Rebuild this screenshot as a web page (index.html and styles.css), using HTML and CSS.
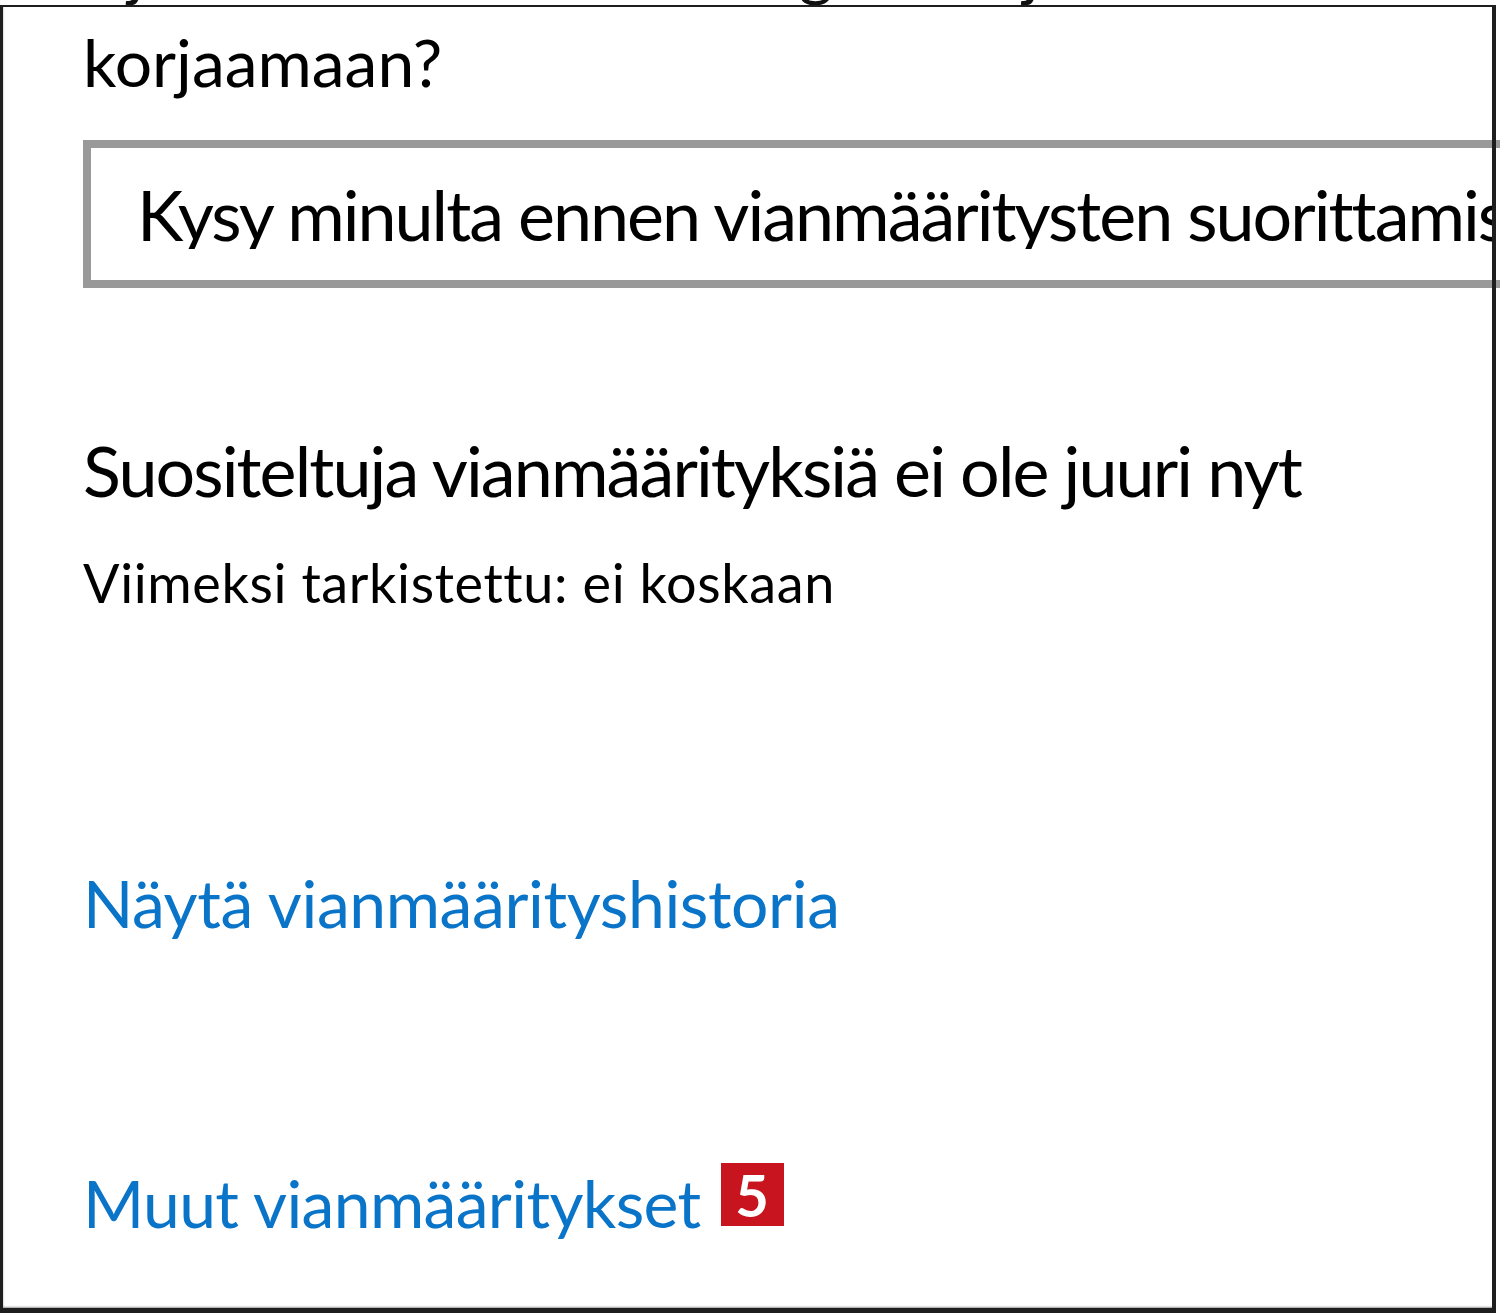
FILE: index.html
```html
<!DOCTYPE html>
<html lang="fi">
<head>
    <meta charset="UTF-8">
    <meta name="viewport" content="width=device-width, initial-scale=1.0">
    <title>Vianmääritys</title>
    <link rel="stylesheet" href="styles.css">
</head>
<body>
    <div class="cut">
        <span class="cut-a">j</span><span class="cut-b">g</span><span class="cut-c">j</span>
    </div>

    <div class="frame">
        <p class="question">korjaamaan?</p>

        <div class="dropdown">
            <span class="dropdown-text">Kysy minulta ennen vianmääritysten suorittamista</span>
        </div>

        <div class="status">
            <h2 class="status-title">Suositeltuja vianmäärityksiä ei ole juuri nyt</h2>
            <p class="status-sub">Viimeksi tarkistettu: ei koskaan</p>
        </div>

        <a class="link history-link" href="#">Näytä vianmäärityshistoria</a>

        <div class="other">
            <a class="link other-link" href="#">Muut vianmääritykset</a>
            <span class="badge">5</span>
        </div>
    </div>
</body>
</html>
```

FILE: styles.css
```css
body {
    font-family: 'Lato', 'Noto Sans', sans-serif;
    margin: 0;
    padding: 0;
    background-color: #ffffff;
    color: #000000;
    height: 1313px;
    overflow: hidden;
}

/* descenders of the line cut off above the frame */
.cut {
    height: 5px;
    overflow: hidden;
    display: flex;
    font-size: 66px;
    line-height: 1;
    color: #111111;
}

.cut span {
    display: block;
    margin-top: -64px;
}

.cut-a {
    margin-left: 128px;
}

.cut-b {
    margin-left: 655px;
}

.cut-c {
    margin-left: 190px;
}

.frame {
    position: relative;
    box-sizing: border-box;
    width: 1496px;
    height: 1308px;
    border-top: 2px solid #1e1e1e;
    border-left: 3px solid #1e1e1e;
    border-bottom: 5px solid #1e1e1e;
    padding: 22px 0 0 80px;
    box-shadow: inset 1px -2px 2px -1px #9a9a9a;
}

.frame::after {
    content: "";
    position: absolute;
    top: -2px;
    right: 0;
    bottom: -5px;
    width: 4px;
    background-color: #1e1e1e;
    z-index: 2;
}

.question {
    font-size: 66px;
    line-height: 1;
    margin: 0;
    font-weight: 400;
}

.dropdown {
    box-sizing: border-box;
    width: 1500px;
    height: 148px;
    margin-top: 45px;
    border: 8px solid #999999;
    padding-left: 46px;
    display: flex;
    align-items: center;
}

.dropdown-text {
    display: block;
    width: 1355px;
    overflow: hidden;
    white-space: nowrap;
    font-size: 70px;
    line-height: 1;
    letter-spacing: -2px;
}

.status {
    margin-top: 147px;
}

.status-title {
    font-size: 70px;
    line-height: 1;
    font-weight: 400;
    margin: 0;
    letter-spacing: -1.9px;
}

.status-sub {
    font-size: 54px;
    line-height: 1;
    margin: 51px 0 0 0;
    letter-spacing: 0.6px;
}

.link {
    font-size: 66px;
    line-height: 1;
    color: #0a74c8;
    text-decoration: none;
}

.history-link {
    display: block;
    margin-top: 260px;
    letter-spacing: -0.4px;
}

.other {
    display: flex;
    align-items: flex-end;
    margin-top: 227px;
}

.other-link {
    letter-spacing: -0.65px;
}

.badge {
    width: 63px;
    height: 63px;
    margin: 0 0 10px 20px;
    background-color: #c8141e;
    color: #ffffff;
    font-size: 58px;
    font-weight: 700;
    line-height: 1;
    display: flex;
    align-items: center;
    justify-content: center;
}
```
